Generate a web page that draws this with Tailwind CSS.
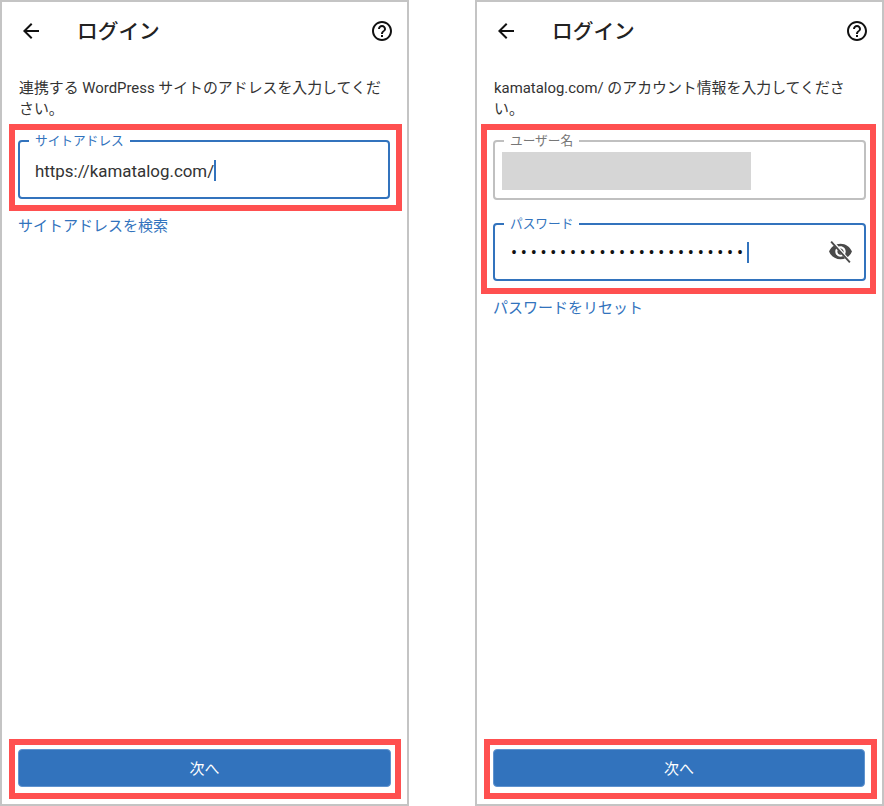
<!DOCTYPE html>
<html lang="ja">
<head>
    <meta charset="UTF-8">
    <meta name="viewport" content="width=device-width, initial-scale=1.0">
    <title>ログイン</title>
    <script src="https://cdn.jsdelivr.net/npm/@tailwindcss/browser@4"></script>
</head>
<body class="bg-white overflow-hidden font-['Roboto','Noto_Sans_CJK_JP',sans-serif]">
    <div class="flex gap-[66px] h-[806px] w-[884px]">

        <!-- left: site address -->
        <div class="w-[409px] h-[806px] border-2 border-[#c4c4c4] flex flex-col px-[16px]">
            <div class="h-[58px] -mx-[16px] pl-[17px] pr-[13px] flex items-center shrink-0">
                <svg class="w-6 h-6" viewBox="0 0 24 24" fill="#111"><path d="M20 11H7.83l5.59-5.59L12 4l-8 8 8 8 1.41-1.41L7.83 13H20v-2z"/></svg>
                <h1 class="ml-[34px] pt-[4px] text-[20.7px] font-medium text-[#222]">ログイン</h1>
                <svg class="w-6 h-6 ml-auto" viewBox="0 0 24 24" fill="#111"><path d="M11 18h2v-2h-2v2zm1-16C6.48 2 2 6.48 2 12s4.48 10 10 10 10-4.48 10-10S17.52 2 12 2zm0 18c-4.41 0-8-3.59-8-8s3.59-8 8-8 8 3.59 8 8-3.59 8-8 8zm0-14c-2.21 0-4 1.79-4 4h2c0-1.1.9-2 2-2s2 .9 2 2c0 2-3 1.75-3 5h2c0-2.25 3-2.5 3-5 0-2.21-1.79-4-4-4z"/></svg>
            </div>
            <p class="mt-[18px] ml-[1px] text-[14.9px] leading-[21px] text-[#333]">連携する WordPress サイトのアドレスを入力してください。</p>
            <div class="mt-[4px] -ml-[9px] -mr-[11px] border-[6px] border-[#ff5050] pt-[10px] pb-[6px] pl-[3px] pr-[6px]">
                <div class="relative h-[59px] border-2 border-[#3273bd] rounded-[4px] flex items-center pl-[15px]">
                    <span class="absolute -top-[10px] left-[9px] bg-white px-[6px] text-[12.7px] leading-[18px] text-[#3273bd]">サイトアドレス</span>
                    <span class="pt-[5px] text-[16.9px] text-[#333]">https://kamatalog.com/</span>
                    <span class="w-[2px] h-[21px] mt-[1px] bg-[#3273bd]"></span>
                </div>
            </div>
            <a class="mt-[5px] text-[15px] leading-[21px] text-[#3273bd]">サイトアドレスを検索</a>
            <div class="mt-auto mb-[5px] -ml-[9px] -mr-[10px] border-[6px] border-[#ff5050] pt-[4px] pb-[6px] pl-[3px] pr-[4px]">
                <button class="w-full h-[38px] pt-[2px] rounded-[4px] bg-[#3273bd] border border-[#5f93cf] text-white text-[15px] flex items-center justify-center">次へ</button>
            </div>
        </div>

        <!-- right: credentials -->
        <div class="w-[409px] h-[806px] border-2 border-[#c4c4c4] flex flex-col px-[16px]">
            <div class="h-[58px] -mx-[16px] pl-[17px] pr-[13px] flex items-center shrink-0">
                <svg class="w-6 h-6" viewBox="0 0 24 24" fill="#111"><path d="M20 11H7.83l5.59-5.59L12 4l-8 8 8 8 1.41-1.41L7.83 13H20v-2z"/></svg>
                <h1 class="ml-[34px] pt-[4px] text-[20.7px] font-medium text-[#222]">ログイン</h1>
                <svg class="w-6 h-6 ml-auto" viewBox="0 0 24 24" fill="#111"><path d="M11 18h2v-2h-2v2zm1-16C6.48 2 2 6.48 2 12s4.48 10 10 10 10-4.48 10-10S17.52 2 12 2zm0 18c-4.41 0-8-3.59-8-8s3.59-8 8-8 8 3.59 8 8-3.59 8-8 8zm0-14c-2.21 0-4 1.79-4 4h2c0-1.1.9-2 2-2s2 .9 2 2c0 2-3 1.75-3 5h2c0-2.25 3-2.5 3-5 0-2.21-1.79-4-4-4z"/></svg>
            </div>
            <p class="mt-[18px] ml-[1px] text-[14.9px] leading-[21px] text-[#333]">kamatalog.com/ のアカウント情報を入力してください。</p>
            <div class="mt-[4px] -ml-[12px] -mr-[10px] border-[6px] border-[#ff5050] pt-[10px] pb-[7px] pl-[6px] pr-[4px]">
                <div class="relative h-[60px] border-2 border-[#c0c0c0] rounded-[4px] pl-[7px] pt-[10px]">
                    <span class="absolute -top-[10px] left-[9px] bg-white px-[6px] text-[12.7px] leading-[18px] text-[#777]">ユーザー名</span>
                    <div class="w-[249px] h-[38px] bg-[#d6d6d6]"></div>
                </div>
                <div class="relative h-[58px] mt-[23px] border-2 border-[#3273bd] rounded-[4px] flex items-center pl-[16px] pr-[11px]">
                    <span class="absolute -top-[10px] left-[9px] bg-white px-[6px] text-[12.7px] leading-[18px] text-[#3273bd]">パスワード</span>
                    <span class="text-[18px] leading-[21px] tracking-[3.75px] text-[#111]">••••••••••••••••••••••••</span>
                    <span class="w-[2px] h-[21px] bg-[#3273bd]"></span>
                    <svg class="w-[25px] h-[25px] ml-auto -mt-[1px]" viewBox="0 0 24 24">
                        <path fill="#4a4a4a" d="M12 4.5C7 4.5 2.73 7.61 1 12c1.73 4.39 6 7.5 11 7.5s9.27-3.11 11-7.5c-1.73-4.39-6-7.5-11-7.5zM12 17c-2.76 0-5-2.24-5-5s2.24-5 5-5 5 2.24 5 5-2.24 5-5 5zm0-8c-1.66 0-3 1.34-3 3s1.34 3 3 3 3-1.34 3-3-1.34-3-3-3z"/>
                        <path d="M4 2l17 20" stroke="#fff" stroke-width="2.8" fill="none"/>
                        <path d="M3 2.5l18 20" stroke="#4a4a4a" stroke-width="1.8" fill="none"/>
                    </svg>
                </div>
            </div>
            <a class="mt-[4px] text-[15px] leading-[21px] text-[#3273bd]">パスワードをリセット</a>
            <div class="mt-auto mb-[5px] -ml-[9px] -mr-[11px] border-[6px] border-[#ff5050] pt-[4px] pb-[6px] pl-[3px] pr-[6px]">
                <button class="w-full h-[38px] pt-[2px] rounded-[4px] bg-[#3273bd] border border-[#5f93cf] text-white text-[15px] flex items-center justify-center">次へ</button>
            </div>
        </div>

    </div>
</body>
</html>
